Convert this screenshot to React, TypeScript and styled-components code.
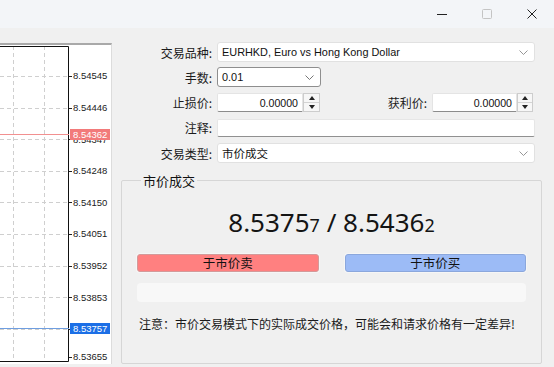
import React from 'react';
import styled, { createGlobalStyle } from 'styled-components';

const Global = createGlobalStyle`
  html, body { margin: 0; padding: 0; }
  body {
    width: 554px; height: 367px; overflow: hidden; background: #f0f0f0;
    font-family: "Noto Sans CJK SC", "Noto Sans", sans-serif;
  }
`;

const Window = styled.div`
  width: 554px; height: 367px; display: flex; flex-direction: column; background: #f0f0f0;
`;

const TitleBar = styled.div`
  height: 28px; flex: none; background: #f3f5f8;
  display: flex; justify-content: flex-end; align-items: stretch;
`;

const CtlButton = styled.div`
  width: 45px; display: flex; align-items: center; justify-content: center;
`;

const Main = styled.div`
  flex: 1; display: flex; min-height: 0;
`;

const ChartPane = styled.div`
  width: 112px; flex: none; margin: 15px 0 3px; background: #fff;
  border-top: 2px solid #a9a9a9; border-right: 1px solid #dcdcdc;
  box-sizing: border-box; overflow: hidden;
  svg { display: block; }
`;

const FormPane = styled.div`
  flex: 1; min-width: 0; display: flex; flex-direction: column;
  padding: 14px 12px 3px 9px;
`;

const Fields = styled.div`
  display: flex; flex-direction: column; gap: 5.3px; padding-right: 7px;
`;

const Row = styled.div<{ $pr?: number }>`
  display: flex; align-items: center; height: 20px; gap: 5px;
  padding-right: ${p => p.$pr ?? 0}px;
`;

const Label = styled.label<{ $grow?: boolean }>`
  width: 91px; flex: ${p => (p.$grow ? '1' : 'none')};
  text-align: right; font-size: 12px; color: #1b1b1b; white-space: nowrap;
`;

const Select = styled.div<{ $w?: number; $dark?: boolean }>`
  ${p => (p.$w ? `width: ${p.$w}px; flex: none;` : 'flex: 1;')}
  height: 20px; box-sizing: border-box; background: #fff;
  border: 1px solid ${p => (p.$dark ? '#8e8e8e' : '#e1e1e1')};
  border-radius: 3px; display: flex; align-items: center; justify-content: space-between;
  padding: 0 6px 0 4px; font-family: "Liberation Sans", "Noto Sans CJK SC", sans-serif;
  font-size: 11px; color: #111;
`;

const SelectText = styled.span<{ $cjk?: boolean }>`
  font-size: ${p => (p.$cjk ? '11.5px' : '10.9px')};
  ${p => (p.$cjk ? 'font-family: "Noto Sans CJK SC", sans-serif;' : '')}
  white-space: nowrap;
`;

const NumBox = styled.div<{ $w: number }>`
  width: ${p => p.$w}px; flex: none; height: 19px; display: flex;
`;

const NumInput = styled.div`
  flex: 1; box-sizing: border-box; background: #fff;
  border: 1px solid #e4e4e4; border-bottom-color: #8c8c8c; border-radius: 2px 0 0 2px;
  display: flex; align-items: center; justify-content: flex-end; padding-right: 4px;
  font-family: "Liberation Sans", sans-serif; font-size: 10.6px; color: #111;
`;

const Spinner = styled.div<{ $w: number }>`
  width: ${p => p.$w}px; flex: none; box-sizing: border-box;
  border: 1px solid #cdcdcd; background: #f7f7f7;
  display: flex; flex-direction: column;
`;

const SpinHalf = styled.div<{ $top?: boolean }>`
  flex: 1; display: flex; align-items: center; justify-content: center;
  ${p => (p.$top ? 'border-bottom: 1px solid #d4d4d4;' : '')}
`;

const TextInput = styled.div`
  flex: 1; height: 18px; box-sizing: border-box; background: #fff;
  border: 1px solid #e6e6e6; border-bottom-color: #909090; border-radius: 2px;
`;

const Group = styled.fieldset`
  flex: 1; margin: 9px 0 0 0; padding: 18px 15px 0; min-width: 0;
  border: 1px solid #d6d6d6; border-radius: 2px;
  display: flex; flex-direction: column;
`;

const Legend = styled.legend`
  padding: 0 2px; margin-left: 4px; font-size: 13px; line-height: 17px; color: #111;
`;

const Price = styled.div`
  text-align: center; font-family: "Noto Sans", sans-serif; font-size: 26px;
  line-height: 30px; color: #141414;
`;

const Small = styled.span`
  font-size: 18px;
`;

const Buttons = styled.div`
  display: grid; grid-template-columns: 1fr 1fr; gap: 26px; margin-top: 14px;
`;

const TradeButton = styled.div<{ $kind: 'sell' | 'buy' }>`
  height: 18px; box-sizing: border-box; border-radius: 3px;
  background: ${p => (p.$kind === 'sell' ? '#ff8080' : '#9cbbf6')};
  border: 1px solid ${p => (p.$kind === 'sell' ? '#d39a9a' : '#8ba7dc')};
  box-shadow: 0 0 0 1px #f6f6f6;
  display: flex; align-items: center; justify-content: center;
  font-size: 12.5px; color: #111; line-height: 16px;
`;

const Progress = styled.div`
  height: 19px; margin-top: 11px; background: #f8f8f8; border-radius: 4px;
`;

const Note = styled.div`
  margin-top: 13px; padding-left: 2px; font-size: 12px; line-height: 17px; color: #1a1a1a;
  white-space: nowrap;
`;

const Chevron = ({ color = '#8a8a8a' }: { color?: string }) => (
  <svg width="9" height="5" viewBox="0 0 9 5">
    <path d="M0.5 0.5 L4.5 4.5 L8.5 0.5" fill="none" stroke={color} strokeWidth="0.9" />
  </svg>
);

const Tri = ({ up }: { up?: boolean }) => (
  <svg width="6" height="4" viewBox="0 0 6 4">
    <path d={up ? 'M0 4 L3 0 L6 4 Z' : 'M0 0 L6 0 L3 4 Z'} fill="#222" />
  </svg>
);

const NumField = ({ w, sw }: { w: number; sw: number }) => (
  <NumBox $w={w}>
    <NumInput>0.00000</NumInput>
    <Spinner $w={sw}>
      <SpinHalf $top><Tri up /></SpinHalf>
      <SpinHalf><Tri /></SpinHalf>
    </Spinner>
  </NumBox>
);

const gridYs = [31, 62.6, 94.2, 125.8, 157.4, 189, 220.6, 252.2, 283.8, 312];
const labels = ['8.54545', '8.54446', '8.54347', '8.54248', '8.54150', '8.54051', '8.53952', '8.53853', '8.53754', '8.53655'];

const Chart = () => (
  <svg width="111" height="319" viewBox="0 0 111 319">
    <defs>
      <clipPath id="below-red">
        <rect x="70" y="95" width="41" height="10" />
      </clipPath>
    </defs>
    <g stroke="#cfcfcf" strokeWidth="1" strokeDasharray="4 3">
      <line x1="13.5" y1="1" x2="13.5" y2="316" />
      <line x1="44.5" y1="1" x2="44.5" y2="316" />
      {gridYs.slice(0, 9).map(y => (
        <line key={y} x1="0" y1={Math.round(y) + 0.5} x2="68" y2={Math.round(y) + 0.5} />
      ))}
    </g>
    <g stroke="#222" strokeWidth="1">
      {gridYs.map(y => (
        <line key={'t' + y} x1="69" y1={Math.round(y) + 0.5} x2="72" y2={Math.round(y) + 0.5} />
      ))}
    </g>
    <path d="M0 1.5 H68.5 V316.5 H0" fill="none" stroke="#111" strokeWidth="1" />
    <g fontFamily="Liberation Sans, sans-serif" fontSize="9.5" fill="#222">
      {gridYs.map((y, i) =>
        i === 8 || i === 2 ? null : (
          <text key={labels[i]} x="73" y={y + 3.4}>{labels[i]}</text>
        )
      )}
      <text x="73" y={gridYs[2] + 3.4} clipPath="url(#below-red)">{labels[2]}</text>
    </g>
    <line x1="0" y1="89.5" x2="69" y2="89.5" stroke="#f29090" strokeWidth="1.2" />
    <rect x="70" y="84" width="40" height="11" fill="#f27a7a" />
    <text x="73" y="92.9" fontFamily="Liberation Sans, sans-serif" fontSize="9.5" fill="#fff">8.54362</text>
    <line x1="0" y1="283.5" x2="69" y2="283.5" stroke="#6f9ee0" strokeWidth="1.2" />
    <rect x="70" y="278" width="40" height="11" fill="#1c6fe6" />
    <text x="73" y="286.9" fontFamily="Liberation Sans, sans-serif" fontSize="9.5" fill="#fff">8.53757</text>
  </svg>
);

export default function App() {
  return (
    <Window>
      <Global />
      <TitleBar>
        <CtlButton>
          <svg width="10" height="10" viewBox="0 0 10 10">
            <line x1="0" y1="5.5" x2="10" y2="5.5" stroke="#222" strokeWidth="1" />
          </svg>
        </CtlButton>
        <CtlButton>
          <svg width="10" height="10" viewBox="0 0 10 10">
            <rect x="0.5" y="0.5" width="9" height="9" rx="1" fill="none" stroke="#c4c4c4" strokeWidth="1" />
          </svg>
        </CtlButton>
        <CtlButton>
          <svg width="10" height="10" viewBox="0 0 10 10">
            <path d="M0.5 0.5 L9.5 9.5 M9.5 0.5 L0.5 9.5" stroke="#222" strokeWidth="1" />
          </svg>
        </CtlButton>
      </TitleBar>
      <Main>
        <ChartPane>
          <Chart />
        </ChartPane>
        <FormPane>
          <Fields>
            <Row>
              <Label>交易品种:</Label>
              <Select>
                <SelectText>EURHKD, Euro vs Hong Kong Dollar</SelectText>
                <Chevron />
              </Select>
            </Row>
            <Row>
              <Label>手数:</Label>
              <Select $w={104} $dark>
                <SelectText>0.01</SelectText>
                <Chevron color="#666" />
              </Select>
            </Row>
            <Row $pr={2}>
              <Label>止损价:</Label>
              <NumField w={103} sw={17} />
              <Label $grow>获利价:</Label>
              <NumField w={101} sw={16} />
            </Row>
            <Row>
              <Label>注释:</Label>
              <TextInput />
            </Row>
            <Row>
              <Label>交易类型:</Label>
              <Select>
                <SelectText $cjk>市价成交</SelectText>
                <Chevron />
              </Select>
            </Row>
          </Fields>
          <Group>
            <Legend>市价成交</Legend>
            <Price>
              8.5375<Small>7</Small> / 8.5436<Small>2</Small>
            </Price>
            <Buttons>
              <TradeButton $kind="sell">于市价卖</TradeButton>
              <TradeButton $kind="buy">于市价买</TradeButton>
            </Buttons>
            <Progress />
            <Note>注意：市价交易模式下的实际成交价格，可能会和请求价格有一定差异!</Note>
          </Group>
        </FormPane>
      </Main>
    </Window>
  );
}
